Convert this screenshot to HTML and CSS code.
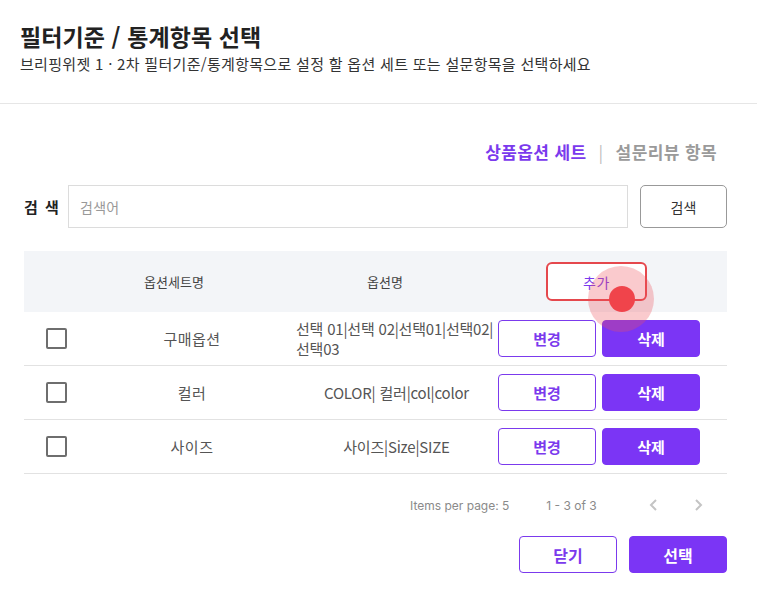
FILE: index.html
```html
<!DOCTYPE html>
<html lang="ko">
<head>
<meta charset="utf-8">
<title>필터기준 / 통계항목 선택</title>
<link rel="stylesheet" href="styles.css">
</head>
<body>
<div class="modal">
  <header class="head">
    <h1 class="title">필터기준 / 통계항목 선택</h1>
    <p class="subtitle">브리핑위젯 1 · 2차 필터기준/통계항목으로 설정 할 옵션 세트 또는 설문항목을 선택하세요</p>
  </header>
  <div class="content">
    <div class="tabs">
      <span class="tab active">상품옵션 세트</span>
      <span class="tab-sep">|</span>
      <span class="tab">설문리뷰 항목</span>
    </div>
    <div class="search">
      <span class="search-label">검 색</span>
      <input class="search-input" type="text" placeholder="검색어">
      <button class="btn-search">검색</button>
    </div>
    <div class="table">
      <div class="thead">
        <span></span>
        <span class="th">옵션세트명</span>
        <span class="th">옵션명</span>
        <span class="th-add"><button class="btn-add">추가</button></span>
      </div>
      <div class="row">
        <span class="cell-check"><span class="checkbox"></span></span>
        <span class="cell-name">구매옵션</span>
        <span class="cell-opt"><span class="opt-text">선택 01|선택 02|선택01|선택02|선택03</span></span>
        <span class="cell-actions"><button class="btn-outline">변경</button><button class="btn-fill">삭제</button></span>
      </div>
      <div class="row">
        <span class="cell-check"><span class="checkbox"></span></span>
        <span class="cell-name">컬러</span>
        <span class="cell-opt"><span class="opt-text">COLOR| 컬러|col|color</span></span>
        <span class="cell-actions"><button class="btn-outline">변경</button><button class="btn-fill">삭제</button></span>
      </div>
      <div class="row">
        <span class="cell-check"><span class="checkbox"></span></span>
        <span class="cell-name">사이즈</span>
        <span class="cell-opt"><span class="opt-text">사이즈|Size|SIZE</span></span>
        <span class="cell-actions"><button class="btn-outline">변경</button><button class="btn-fill">삭제</button></span>
      </div>
    </div>
    <div class="pager">
      <span class="pager-size">Items per page: 5</span>
      <span class="pager-range">1 - 3 of 3</span>
      <span class="pager-nav">
        <svg class="chev" width="14" height="14" viewBox="0 0 14 14"><path d="M9 2 L4 7 L9 12" fill="none" stroke="#c4c4c4" stroke-width="2"/></svg>
        <svg class="chev" width="14" height="14" viewBox="0 0 14 14"><path d="M5 2 L10 7 L5 12" fill="none" stroke="#c4c4c4" stroke-width="2"/></svg>
      </span>
    </div>
    <div class="footer">
      <button class="btn-outline btn-lg">닫기</button>
      <button class="btn-fill btn-lg">선택</button>
    </div>
  </div>
  <span class="touch-halo"></span>
  <span class="touch-dot"></span>
</div>
</body>
</html>
```
FILE: styles.css
```css
* { box-sizing: border-box; }
html, body { margin: 0; padding: 0; background: #fff; }
body {
  font-family: "Noto Sans CJK KR", "Noto Sans", sans-serif;
  color: #333;
}
.modal {
  position: relative;
  width: 757px;
  height: 598px;
  overflow: hidden;
}
.head {
  padding: 20px 20px 29px;
  border-bottom: 1px solid #e6e6e6;
}
.title {
  margin: 0;
  font-size: 23px;
  line-height: 32px;
  font-weight: 700;
  color: #222;
  letter-spacing: 0.1px;
}
.subtitle {
  margin: 2px 0 0;
  font-size: 15px;
  line-height: 20px;
  color: #333;
  letter-spacing: 0.3px;
}
.content {
  padding: 35px 30px 0 24px;
}
.tabs {
  display: flex;
  justify-content: flex-end;
  align-items: center;
  gap: 12px;
  padding-right: 10px;
  height: 24px;
  font-size: 17px;
  font-weight: 700;
  letter-spacing: 0.4px;
}
.tab { color: #9a9a9a; }
.tab.active { color: #7b3aed; }
.tab-sep { color: #bdbdbd; font-weight: 400; }
.search {
  display: flex;
  align-items: center;
  margin-top: 22px;
  height: 43px;
}
.search-label {
  width: 44px;
  font-size: 15px;
  font-weight: 700;
  color: #222;
  letter-spacing: 1.5px;
}
.search-input {
  flex: 1;
  height: 43px;
  border: 1px solid #dcdcdc;
  padding: 0 11px;
  font-family: inherit;
  font-size: 14px;
  letter-spacing: 0.3px;
  color: #333;
  outline: none;
}
.search-input::placeholder { color: #999; }
.btn-search {
  margin-left: 12px;
  width: 87px;
  height: 43px;
  background: #fff;
  border: 1px solid #999;
  border-radius: 5px;
  font-family: inherit;
  font-size: 14px;
  color: #333;
}
.table { margin-top: 23px; }
.thead {
  display: grid;
  grid-template-columns: 64px 172px 250px 1fr;
  align-items: center;
  height: 61px;
  background: #f3f5f8;
}
.th {
  text-align: center;
  font-size: 13px;
  color: #444;
}
.th-add { padding-left: 36px; display: flex; }
.btn-add {
  width: 101px;
  height: 39px;
  background: #fff;
  border: 2px solid #e5484d;
  border-radius: 6px;
  font-family: inherit;
  font-size: 14px;
  letter-spacing: 0.5px;
  color: #7b3aed;
}
.row {
  display: grid;
  grid-template-columns: 64px 208px 201px 1fr;
  align-items: center;
  height: 54px;
  border-bottom: 1px solid #e2e2e2;
}
.cell-check { padding-left: 22px; display: flex; }
.checkbox {
  width: 21px;
  height: 21px;
  border: 2px solid #6e6e6e;
  border-radius: 2px;
}
.cell-name {
  text-align: center;
  font-size: 15px;
  letter-spacing: 0.5px;
  color: #555;
}
.cell-opt {
  display: flex;
  justify-content: center;
  font-size: 15px;
  line-height: 20px;
  color: #555;
  letter-spacing: -0.2px;
  word-break: keep-all;
}
.opt-text { text-align: left; }
.cell-actions {
  display: flex;
  gap: 6px;
  padding-left: 1px;
}
.btn-outline, .btn-fill {
  width: 98px;
  height: 37px;
  border-radius: 4px;
  font-family: inherit;
  font-size: 15px;
  font-weight: 700;
}
.btn-outline {
  background: #fff;
  border: 1px solid #7b3aed;
  color: #7b3aed;
}
.btn-fill {
  background: #7b35f5;
  border: 1px solid #7b35f5;
  color: #fff;
}
.pager {
  display: flex;
  align-items: center;
  margin-top: 20px;
  height: 22px;
  padding-left: 386px;
  font-family: "Inter", "Roboto", sans-serif;
  font-size: 12px;
  color: #8a8a8a;
}
.pager-range { margin-left: 37px; }
.pager-nav {
  display: flex;
  gap: 30px;
  margin-left: 50px;
}
.chev { display: block; }
.footer {
  display: flex;
  justify-content: flex-end;
  gap: 12px;
  margin-top: 20px;
}
.btn-lg { font-size: 16px; }
.touch-halo {
  position: absolute;
  left: 588px;
  top: 266px;
  width: 66px;
  height: 66px;
  border-radius: 50%;
  background: rgba(240, 80, 90, 0.3);
}
.touch-dot {
  position: absolute;
  left: 609px;
  top: 286px;
  width: 26px;
  height: 26px;
  border-radius: 50%;
  background: #f0444b;
}
```
